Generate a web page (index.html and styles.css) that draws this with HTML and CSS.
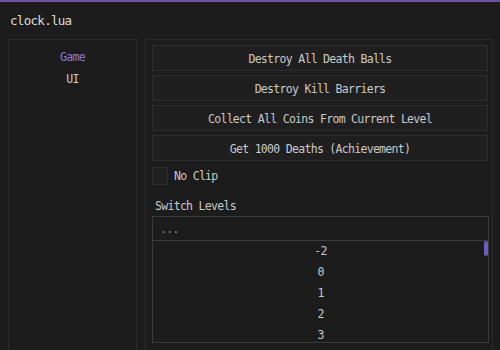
FILE: index.html
```html
<!DOCTYPE html>
<html>
<head>
<meta charset="utf-8">
<link rel="stylesheet" href="styles.css">
</head>
<body>
<div class="window">
  <div class="title">clock.lua</div>
  <div class="main">
    <div class="tabs">
      <div class="tab active">Game</div>
      <div class="tab">UI</div>
    </div>
    <div class="content">
      <div class="btn">Destroy All Death Balls</div>
      <div class="btn">Destroy Kill Barriers</div>
      <div class="btn">Collect All Coins From Current Level</div>
      <div class="btn">Get 1000 Deaths (Achievement)</div>
      <div class="check-row"><span class="checkbox"></span><span>No Clip</span></div>
      <div class="label">Switch Levels</div>
      <div class="dropdown">
        <div class="dd-input">...</div>
        <div class="dd-list">
          <div class="thumb"></div>
          <div class="dd-item">-2</div>
          <div class="dd-item">0</div>
          <div class="dd-item">1</div>
          <div class="dd-item">2</div>
          <div class="dd-item">3</div>
        </div>
      </div>
    </div>
  </div>
</div>
</body>
</html>
```
FILE: styles.css
```css
html, body {
  margin: 0;
  padding: 0;
  background: #1c1c1c;
  overflow: hidden;
}
.window {
  width: 500px;
  height: 350px;
  border-top: 2px solid #6f52a8;
  box-sizing: border-box;
  font-family: "DejaVu Sans Mono", "Liberation Mono", monospace;
  font-size: 11.5px;
  letter-spacing: -0.7px;
  color: #c9c9c9;
  overflow: hidden;
}
.title {
  height: 37px;
  line-height: 37px;
  padding-left: 10px;
  font-size: 12.5px;
  letter-spacing: -0.7px;
  color: #dcdcdc;
}
.main {
  display: flex;
  gap: 8px;
  padding-left: 8px;
  height: 330px;
}
.tabs {
  width: 129px;
  box-sizing: border-box;
  border: 1px solid #2b2b2b;
  border-bottom: none;
  padding-top: 6px;
  text-align: center;
}
.tab {
  height: 22px;
  line-height: 22px;
}
.tab.active {
  color: #8b7bd8;
}
.content {
  width: 348px;
  box-sizing: border-box;
  border: 1px solid #2b2b2b;
  border-bottom: none;
  padding: 5px 3px 0 6px;
  display: flex;
  flex-direction: column;
}
.btn {
  height: 26px;
  line-height: 26px;
  box-sizing: border-box;
  border: 1px solid #2e2e2e;
  background: #1f1f1f;
  text-align: center;
  margin-bottom: 4px;
  width: 336px;
}
.check-row {
  display: flex;
  align-items: center;
  gap: 6px;
  height: 20px;
  margin-top: 1px;
}
.checkbox {
  width: 16px;
  height: 18px;
  box-sizing: border-box;
  border: 1px solid #2e2e2e;
  background: #1f1f1f;
}
.label {
  margin-top: 10px;
  height: 20px;
  line-height: 20px;
  padding-left: 3px;
}
.dropdown {
  margin-top: 0;
  width: 337px;
  height: 127px;
  box-sizing: border-box;
  border: 1px solid #3a3a3a;
  overflow: hidden;
}
.dd-input {
  height: 24px;
  line-height: 24px;
  padding-left: 7px;
  color: #8c8c8c;
  border-bottom: 1px solid #3d3d3d;
  box-sizing: border-box;
}
.dd-list {
  position: relative;
  text-align: center;
}
.dd-item {
  height: 21px;
  line-height: 21px;
}
.thumb {
  position: absolute;
  right: 0;
  top: 0;
  width: 4px;
  height: 15px;
  border-radius: 2px;
  background: #6a5ec4;
}
```
